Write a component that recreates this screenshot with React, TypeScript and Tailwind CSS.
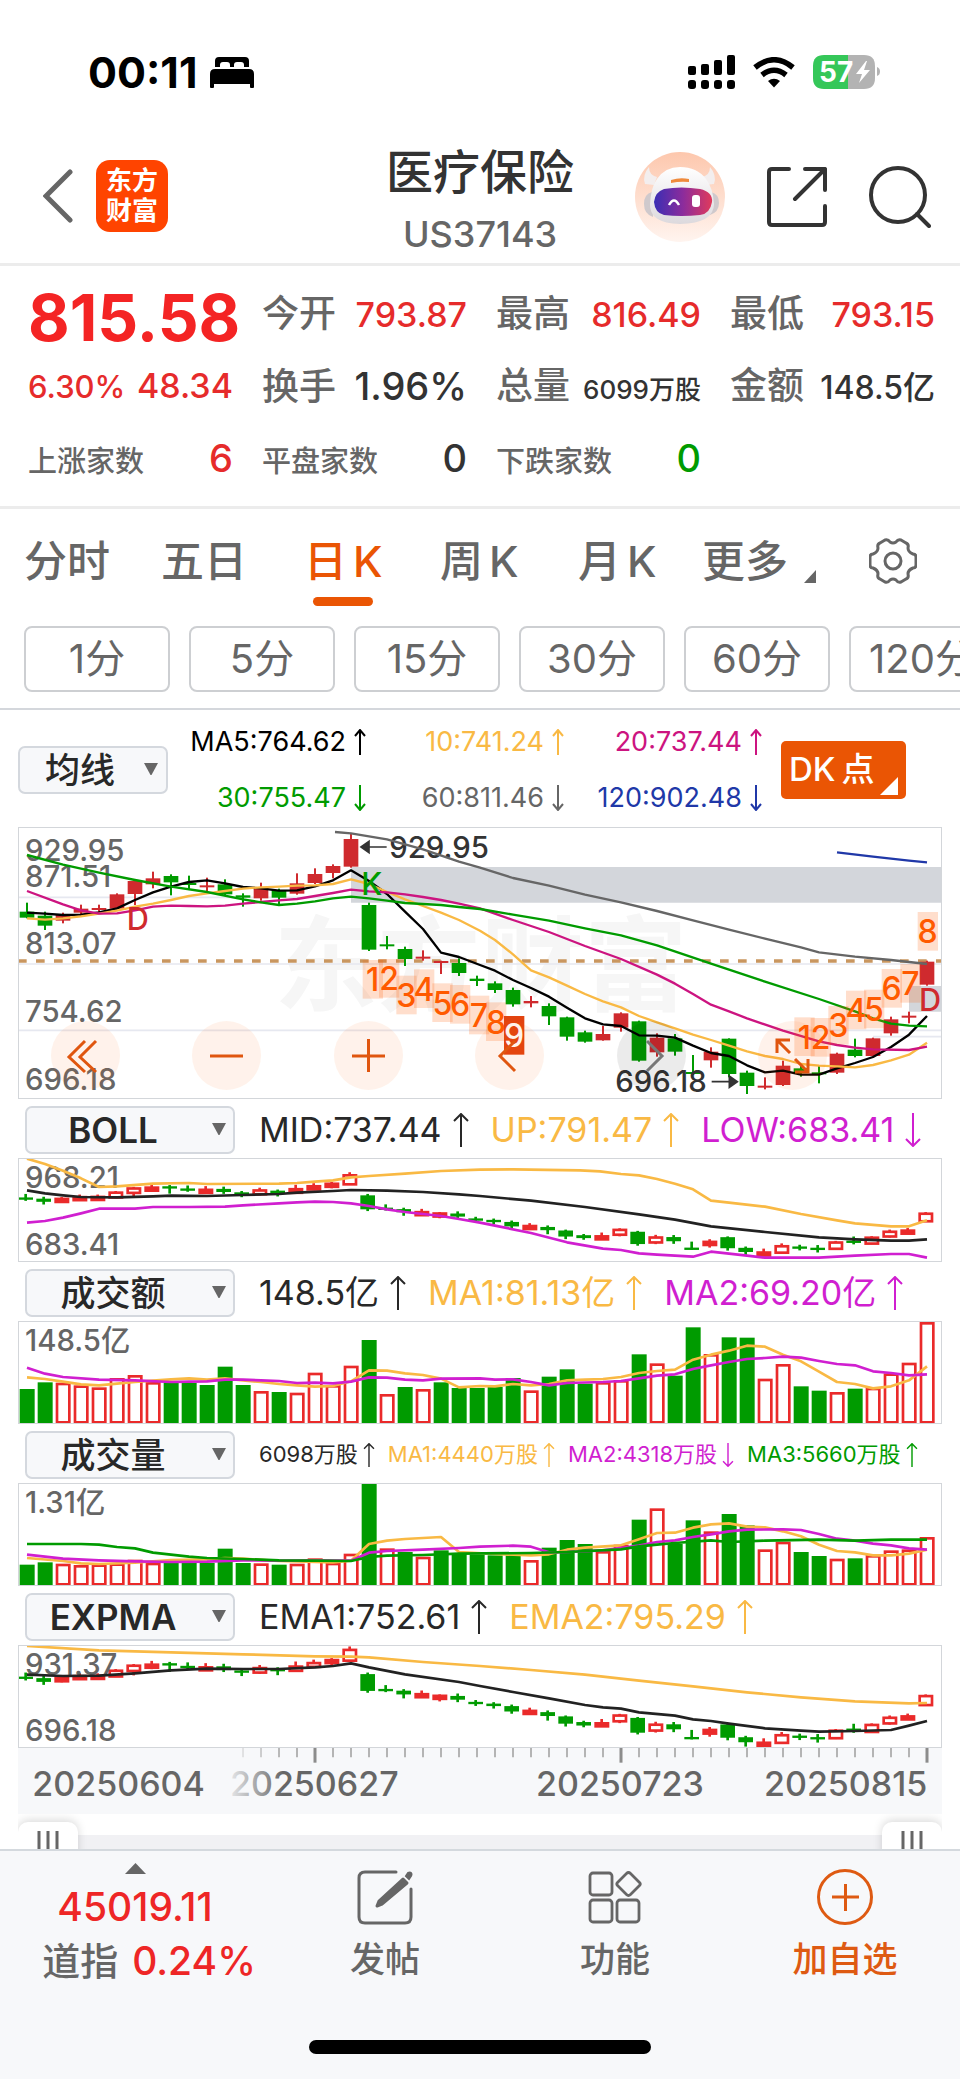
import React from 'react';

type Pt = [number, number];
type Candle = ['r' | 'g', number, number, number, number];
type Bar = ['r' | 'g', number];

const RED = '#cf2a2e';
const BRIGHT_RED = '#ea2a2a';
const GREEN = '#009b00';
const YELLOW = '#f9b944';
const MAGENTA = '#d01fd0';

const FIRST_X = 81;
const STEP = 54;

const candles: Candle[] = [
  ['g', 278, 325, 305, 323], ['g', 305, 360, 317, 347], ['r', 308, 340, 313, 332], ['r', 284, 312, 296, 308],
  ['r', 284, 308, 294, 300], ['r', 250, 298, 253, 296], ['r', 210, 285, 213, 252], ['r', 185, 235, 205, 223],
  ['g', 193, 256, 198, 217], ['g', 197, 238, 219, 225], ['r', 203, 245, 226, 232], ['g', 208, 258, 223, 253],
  ['g', 250, 290, 256, 263], ['r', 218, 272, 232, 265], ['g', 236, 283, 240, 263], ['r', 190, 254, 220, 251],
  ['r', 175, 222, 192, 219], ['r', 163, 205, 168, 189], ['r', 70, 173, 87, 170], ['g', 278, 423, 285, 419],
  ['g', 378, 418, 403, 409], ['g', 410, 468, 417, 447], ['r', 421, 452, 440, 446], ['r', 452, 492, 453, 459],
  ['g', 445, 498, 459, 489], ['g', 497, 528, 506, 513], ['g', 514, 549, 520, 540], ['g', 533, 590, 540, 583],
  ['r', 558, 592, 573, 580], ['g', 580, 645, 588, 619], ['g', 620, 692, 622, 680], ['g', 662, 698, 667, 695],
  ['r', 648, 692, 672, 691], ['r', 607, 665, 610, 653], ['g', 632, 755, 634, 752], ['r', 670, 740, 683, 727],
  ['g', 672, 737, 685, 725], ['g', 735, 795, 786, 792], ['r', 712, 773, 725, 751], ['g', 685, 802, 686, 792],
  ['g', 782, 852, 788, 828], ['r', 802, 838, 827, 833], ['r', 752, 828, 767, 825], ['g', 765, 800, 775, 787],
  ['g', 768, 820, 787, 793], ['r', 728, 792, 731, 788], ['g', 686, 742, 719, 738], ['r', 683, 740, 685, 738],
  ['r', 620, 677, 628, 670], ['r', 605, 640, 617, 623], ['r', 452, 527, 455, 524],
];

const ma5: Pt[] = [[81, 308], [135, 311], [189, 315], [243, 314], [297, 307], [351, 295], [405, 270], [459, 247], [513, 230], [567, 216], [621, 211], [675, 220], [729, 231], [783, 235], [837, 242], [891, 241], [945, 229], [999, 211], [1053, 181], [1107, 213], [1161, 252], [1215, 305], [1269, 357], [1323, 428], [1377, 441], [1440, 465], [1485, 482], [1539, 510], [1593, 534], [1647, 560], [1701, 593], [1755, 625], [1809, 643], [1863, 648], [1917, 676], [1971, 677], [2025, 683], [2079, 707], [2133, 729], [2187, 738], [2241, 766], [2295, 787], [2349, 782], [2403, 794], [2457, 794], [2511, 775], [2565, 759], [2619, 741], [2673, 711], [2727, 674], [2781, 618]];
const ma10: Pt[] = [[81, 325], [135, 329], [189, 325], [243, 319], [297, 311], [351, 302], [405, 290], [459, 281], [513, 270], [567, 258], [621, 250], [675, 243], [729, 236], [783, 232], [837, 230], [891, 227], [945, 226], [999, 222], [1053, 208], [1107, 222], [1161, 246], [1215, 268], [1269, 288], [1323, 308], [1377, 330], [1440, 362], [1485, 390], [1539, 433], [1593, 481], [1647, 502], [1701, 527], [1755, 552], [1809, 574], [1863, 592], [1917, 618], [1971, 637], [2025, 655], [2079, 674], [2133, 690], [2187, 707], [2241, 724], [2295, 738], [2349, 747], [2403, 762], [2457, 767], [2511, 769], [2565, 772], [2619, 765], [2673, 751], [2727, 734], [2781, 698]];
const ma20: Pt[] = [[81, 243], [189, 283], [243, 301], [297, 311], [351, 310], [405, 301], [459, 290], [513, 287], [567, 288], [621, 289], [675, 287], [729, 281], [783, 276], [837, 271], [891, 267], [945, 258], [999, 249], [1053, 239], [1107, 244], [1161, 247], [1215, 253], [1269, 261], [1323, 270], [1377, 281], [1440, 295], [1539, 330], [1647, 366], [1755, 408], [1863, 447], [1971, 494], [2025, 521], [2079, 552], [2133, 584], [2187, 604], [2241, 625], [2349, 662], [2457, 694], [2511, 705], [2565, 713], [2619, 718], [2727, 720], [2781, 710]];
const ma30: Pt[] = [[81, 135], [189, 164], [297, 188], [405, 210], [513, 230], [621, 246], [729, 268], [783, 277], [837, 285], [891, 281], [945, 274], [999, 265], [1053, 260], [1107, 265], [1161, 272], [1215, 279], [1323, 285], [1377, 291], [1440, 297], [1539, 314], [1647, 332], [1755, 355], [1863, 376], [1971, 406], [2133, 461], [2295, 515], [2457, 567], [2565, 604], [2619, 625], [2673, 641], [2727, 647], [2781, 649]];
const ma60: Pt[] = [[1005, 66], [1053, 70], [1161, 88], [1269, 118], [1377, 155], [1440, 173], [1539, 204], [1647, 227], [1755, 254], [1863, 277], [1971, 303], [2079, 331], [2187, 359], [2295, 386], [2403, 412], [2457, 427], [2565, 440], [2673, 450], [2781, 462]];
const ma120: Pt[] = [[2511, 127], [2619, 140], [2727, 152], [2781, 157]];

const bollUp: Pt[] = [[81, 177], [135, 193], [189, 213], [243, 236], [297, 262], [351, 260], [459, 252], [567, 250], [621, 253], [837, 252], [891, 250], [945, 246], [999, 242], [1053, 233], [1107, 229], [1215, 222], [1323, 214], [1440, 210], [1540, 209], [1740, 212], [1800, 215], [1863, 223], [1917, 227], [1971, 238], [2025, 252], [2079, 269], [2133, 303], [2187, 309], [2295, 321], [2403, 343], [2511, 362], [2565, 371], [2673, 380], [2727, 380], [2781, 362]];
const bollMid: Pt[] = [[81, 272], [135, 281], [189, 287], [243, 292], [351, 293], [459, 290], [513, 288], [621, 289], [729, 286], [837, 283], [891, 279], [999, 274], [1053, 271], [1161, 273], [1269, 277], [1377, 284], [1440, 289], [1593, 303], [1755, 322], [1917, 344], [2025, 360], [2133, 380], [2295, 397], [2457, 413], [2565, 419], [2673, 423], [2727, 423], [2781, 419]];
const bollLow: Pt[] = [[81, 369], [135, 364], [189, 354], [243, 341], [297, 327], [405, 327], [459, 322], [567, 322], [675, 321], [729, 317], [837, 311], [891, 308], [945, 306], [999, 307], [1053, 311], [1107, 319], [1161, 329], [1215, 337], [1323, 349], [1377, 358], [1440, 369], [1485, 378], [1593, 400], [1701, 428], [1809, 447], [1863, 451], [1917, 461], [1971, 465], [2079, 471], [2133, 456], [2187, 462], [2241, 468], [2295, 474], [2457, 474], [2565, 468], [2673, 463], [2727, 463], [2781, 474]];

const turnover: Bar[] = [['g', 868], ['g', 848], ['r', 850], ['r', 858], ['r', 864], ['r', 836], ['r', 827], ['r', 848], ['g', 850], ['g', 850], ['g', 856], ['g', 801], ['g', 856], ['r', 875], ['g', 877], ['r', 880], ['r', 820], ['r', 857], ['r', 799], ['g', 721], ['r', 884], ['g', 862], ['r', 869], ['g', 848], ['g', 865], ['g', 865], ['g', 862], ['g', 835], ['r', 873], ['g', 831], ['g', 809], ['g', 852], ['r', 848], ['r', 842], ['g', 764], ['r', 792], ['g', 828], ['g', 683], ['r', 764], ['g', 713], ['g', 714], ['r', 838], ['r', 794], ['g', 860], ['g', 873], ['r', 878], ['g', 867], ['r', 865], ['r', 822], ['r', 790], ['r', 668]];
const turnoverMa1: Pt[] = [[81, 833], [135, 838], [189, 846], [243, 854], [297, 857], [351, 852], [405, 847], [459, 843], [513, 839], [567, 836], [621, 840], [675, 836], [729, 842], [783, 847], [837, 853], [891, 857], [945, 861], [999, 859], [1053, 845], [1107, 812], [1161, 813], [1215, 821], [1269, 826], [1323, 837], [1377, 863], [1440, 859], [1485, 860], [1539, 853], [1593, 857], [1647, 853], [1701, 842], [1755, 840], [1809, 838], [1863, 832], [1917, 820], [1971, 814], [2025, 810], [2079, 780], [2133, 765], [2187, 753], [2241, 738], [2295, 741], [2349, 765], [2403, 785], [2457, 816], [2511, 847], [2565, 853], [2619, 866], [2673, 860], [2727, 842], [2781, 800]];
const turnoverMa2: Pt[] = [[81, 804], [135, 822], [189, 832], [297, 840], [405, 842], [513, 847], [567, 846], [621, 845], [675, 840], [729, 840], [783, 842], [837, 844], [891, 850], [945, 849], [999, 851], [1053, 846], [1107, 833], [1161, 834], [1215, 840], [1269, 842], [1323, 837], [1440, 836], [1485, 840], [1539, 839], [1593, 847], [1647, 857], [1701, 850], [1809, 847], [1863, 844], [1917, 836], [1971, 828], [2025, 824], [2079, 808], [2133, 797], [2187, 787], [2241, 778], [2295, 775], [2349, 771], [2403, 774], [2457, 784], [2511, 793], [2565, 797], [2619, 815], [2673, 820], [2727, 827], [2781, 824]];

const volume: Bar[] = [['g', 435], ['g', 428], ['r', 433], ['r', 437], ['r', 435], ['r', 432], ['r', 421], ['r', 430], ['g', 425], ['g', 428], ['g', 430], ['g', 387], ['g', 430], ['r', 432], ['g', 435], ['r', 433], ['r', 417], ['r', 430], ['r', 403], ['g', 192], ['r', 387], ['g', 397], ['r', 412], ['g', 392], ['g', 402], ['g', 405], ['g', 407], ['g', 407], ['r', 422], ['g', 384], ['g', 361], ['g', 373], ['r', 395], ['r', 376], ['g', 300], ['r', 267], ['g', 373], ['g', 302], ['r', 336], ['g', 283], ['g', 317], ['r', 390], ['r', 367], ['g', 397], ['g', 409], ['r', 418], ['g', 416], ['r', 407], ['r', 393], ['r', 390], ['r', 353]];
const volumeMa1: Pt[] = [[81, 415], [189, 424], [243, 431], [297, 433], [405, 429], [513, 421], [621, 419], [675, 415], [729, 417], [837, 424], [891, 425], [999, 428], [1053, 423], [1107, 373], [1161, 363], [1215, 358], [1323, 352], [1377, 397], [1485, 403], [1593, 407], [1647, 404], [1701, 390], [1755, 384], [1863, 377], [1917, 359], [1971, 340], [2025, 339], [2079, 324], [2133, 314], [2187, 311], [2241, 321], [2295, 323], [2349, 335], [2403, 350], [2457, 375], [2511, 394], [2565, 398], [2619, 407], [2673, 407], [2727, 402], [2781, 390]];
const volumeMa2: Pt[] = [[81, 405], [135, 411], [189, 417], [297, 422], [405, 425], [513, 427], [621, 426], [729, 422], [837, 423], [945, 422], [1053, 423], [1107, 399], [1161, 394], [1269, 390], [1377, 385], [1440, 381], [1539, 378], [1593, 381], [1647, 398], [1701, 397], [1809, 392], [1917, 378], [1971, 367], [2025, 362], [2079, 352], [2133, 344], [2187, 335], [2241, 330], [2349, 329], [2403, 331], [2457, 343], [2511, 357], [2565, 363], [2619, 372], [2673, 377], [2727, 386], [2781, 390]];
const volumeMa3: Pt[] = [[81, 373], [243, 373], [297, 375], [351, 382], [405, 386], [459, 399], [513, 405], [567, 411], [621, 415], [729, 418], [837, 422], [945, 423], [1053, 424], [1107, 412], [1161, 408], [1269, 406], [1377, 402], [1593, 400], [1701, 397], [1863, 389], [1917, 380], [1971, 375], [2025, 370], [2133, 362], [2187, 367], [2295, 363], [2457, 360], [2565, 363], [2673, 360], [2781, 360]];

const ema1: Pt[] = [[81, 765], [189, 769], [297, 768], [405, 761], [513, 752], [621, 747], [729, 748], [837, 748], [945, 743], [999, 739], [1053, 731], [1107, 743], [1215, 764], [1377, 787], [1440, 799], [1539, 817], [1647, 836], [1755, 856], [1809, 863], [1863, 867], [1917, 878], [2025, 888], [2079, 899], [2133, 904], [2187, 912], [2295, 926], [2403, 933], [2457, 936], [2565, 934], [2673, 931], [2727, 918], [2781, 904]];
const ema2: Pt[] = [[81, 679], [297, 692], [513, 698], [729, 704], [945, 710], [1053, 711], [1107, 713], [1269, 727], [1440, 739], [1593, 751], [1755, 765], [1917, 783], [2079, 800], [2241, 818], [2403, 833], [2565, 845], [2727, 851], [2781, 850]];

const countMarks: { n: number; x: number; y: number; solid?: boolean }[] = [
  { n: 1, x: 1118, y: 450 }, { n: 2, x: 1167, y: 447 }, { n: 3, x: 1219, y: 497 }, { n: 4, x: 1272, y: 478 },
  { n: 5, x: 1327, y: 520 }, { n: 6, x: 1380, y: 525 }, { n: 7, x: 1437, y: 557 }, { n: 8, x: 1488, y: 577 },
  { n: 9, x: 1542, y: 618, solid: true },
  { n: 1, x: 2413, y: 622 }, { n: 2, x: 2462, y: 624 }, { n: 3, x: 2515, y: 588 }, { n: 4, x: 2568, y: 542 },
  { n: 5, x: 2622, y: 539 }, { n: 6, x: 2675, y: 477 }, { n: 7, x: 2731, y: 462 }, { n: 8, x: 2783, y: 306 },
];

function Line({ pts, color, w = 7 }: { pts: Pt[]; color: string; w?: number }) {
  return <polyline points={pts.map((p) => p.join(',')).join(' ')} fill="none" stroke={color} strokeWidth={w} strokeLinejoin="round" />;
}

function Label({ x = 75, y, size = 88, fill = '#666666', children }: { x?: number; y: number; size?: number; fill?: string; children: React.ReactNode }) {
  return <text x={x} y={y} fontSize={size} fontWeight={500} fill={fill}>{children}</text>;
}

function MainCandles() {
  return (
    <g>
      {candles.map(([c, hi, lo, top, bot], i) => {
        const x = FIRST_X + i * STEP;
        const color = c === 'r' ? RED : GREEN;
        return (
          <g key={i} fill={color}>
            <rect x={x - 3} y={hi} width={6} height={lo - hi} />
            <rect x={x - 22} y={top} width={44} height={Math.max(6, bot - top)} />
          </g>
        );
      })}
    </g>
  );
}

function SmallCandles({ scale, offset }: { scale: number; offset: number }) {
  return (
    <g>
      {candles.map(([c, hi, lo, t, b], i) => {
        const x = FIRST_X - 4 + i * STEP;
        const y = t * scale + offset;
        const h = (b - t) * scale;
        const wickTop = hi * scale + offset - 3;
        const wickH = (lo - hi) * scale + 6;
        if (c === 'g') {
          return (
            <g key={i} fill={GREEN}>
              <rect x={x - 4} y={wickTop} width={8} height={wickH} />
              <rect x={x - 22} y={y - 1} width={44} height={Math.max(7, h)} />
            </g>
          );
        }
        const bodyH = Math.max(17, h + 9);
        return (
          <g key={i}>
            <rect x={x - 4} y={wickTop} width={8} height={wickH} fill={BRIGHT_RED} />
            <rect x={x - 18} y={y + 1} width={37} height={bodyH - 8} fill={bodyH > 19 ? '#ffffff' : BRIGHT_RED} stroke={BRIGHT_RED} strokeWidth={8} />
          </g>
        );
      })}
    </g>
  );
}

function Bars({ data, base }: { data: Bar[]; base: number }) {
  return (
    <g>
      {data.map(([c, y], i) => {
        const x = FIRST_X + i * STEP;
        return c === 'g'
          ? <rect key={i} x={x - 22} y={y} width={45} height={base - y} fill={GREEN} />
          : <rect key={i} x={x - 18} y={y + 3} width={37} height={base - y - 6} fill="#ffffff" stroke={BRIGHT_RED} strokeWidth={8} />;
      })}
    </g>
  );
}

function Plot({ top, height, label, children }: { top: number; height: number; label: string; children: React.ReactNode }) {
  return (
    <svg role="img" aria-label={label} viewBox={`54 ${top} 2772 ${height}`} className="block h-auto w-full">
      {children}
      <rect x={55.5} y={top + 1.5} width={2769} height={height - 3} fill="none" stroke="#d3d6da" strokeWidth={3} />
    </svg>
  );
}

function Arrow({ down = false, small = false }: { down?: boolean; small?: boolean }) {
  return (
    <svg viewBox="0 0 16 34" className={small ? 'h-[24px] w-[12px]' : 'h-[34px] w-[16px]'} fill="none" stroke="currentColor" strokeWidth={2}>
      {down ? <path d="M8 0v33M1 26l7 7 7-7" /> : <path d="M8 34V1M1 8l7-7 7 7" />}
    </svg>
  );
}

function Picker({ id, label, options, narrow = false, cjk = false }: { id: string; label: string; options: string[]; narrow?: boolean; cjk?: boolean }) {
  return (
    <div className={narrow ? 'relative w-[150px] shrink-0' : 'relative w-[210px] shrink-0'}>
      <label htmlFor={id} className="sr-only">{label}</label>
      <select
        id={id}
        defaultValue={options[0]}
        className={`h-[48px] w-full appearance-none rounded-[7px] border-2 border-[#d4d8de] bg-[#f7f8fa] text-center text-[35px] leading-[40px] text-[#282828] ${cjk ? 'font-medium' : 'font-semibold'} ${narrow ? 'pr-[26px]' : 'pr-[34px]'}`}
      >
        {options.map((o) => <option key={o}>{o}</option>)}
      </select>
      <svg viewBox="0 0 14 12" className={`pointer-events-none absolute top-[17px] h-[12px] w-[14px] ${narrow ? 'right-[10px]' : 'right-[9px]'}`} fill="#666666"><path d="M0 0h14L7.500 12h-1z" /></svg>
    </div>
  );
}

type Reading = { text: string; color: string; down?: boolean };

function IndicatorRow({ id, options, readings, small = false, cjk = false }: { id: string; options: string[]; readings: Reading[]; small?: boolean; cjk?: boolean }) {
  return (
    <div className="flex h-[59px] items-center pt-[2px] pl-[7px]">
      <Picker id={id} label="指标" options={options} cjk={cjk} />
      <div className={`ml-[24px] flex items-center font-normal whitespace-nowrap ${small ? 'gap-[13px] text-[22px]' : 'gap-[22px] text-[34px]'}`}>
        {readings.map((r) => (
          <span key={r.text} className={`flex items-center ${small ? 'gap-[5px]' : 'gap-[11px]'} ${r.color}`}>
            {r.text}<Arrow down={r.down} small={small} />
          </span>
        ))}
      </div>
    </div>
  );
}

function StatusBar() {
  return (
    <div className="flex h-[144px] items-center justify-between pr-[80px] pl-[88px]">
      <div className="flex items-center gap-[13px]">
        <span className="text-[43px] leading-[48px] font-bold text-black">00:11</span>
        <svg viewBox="0 0 44 31" className="h-[31px] w-[44px]">
          <path d="M5 10V4q0-4 4-4h26q4 0 4 4v6h-5V8q0-3-3-3h-4q-3 0-3 3v2h-4V8q0-3-3-3h-4q-3 0-3 3v2z" />
          <path d="M0 30V17q0-5 5-5h34q5 0 5 5v13q0 1-1 1h-2q-1 0-1-1v-3H4v3q0 1-1 1H1q-1 0-1-1z" />
        </svg>
      </div>
      <div className="flex items-center">
        <svg viewBox="0 0 48 34" className="h-[34px] w-[48px]">
          <rect x="0" y="11" width="8" height="9" rx="2" /><rect x="13" y="9" width="8" height="11" rx="2" />
          <rect x="26" y="5" width="8" height="15" rx="2" /><rect x="39" y="0" width="8" height="20" rx="2" />
          <rect x="0" y="25" width="8" height="9" rx="3" /><rect x="13" y="25" width="8" height="9" rx="3" />
          <rect x="26" y="25" width="8" height="9" rx="3" /><rect x="39" y="25" width="8" height="9" rx="3" />
        </svg>
        <svg viewBox="0 0 42 31" className="ml-[17px] h-[31px] w-[42px]" fill="none" stroke="#000" strokeWidth="5.500">
          <path d="M2 10.500q19-15.500 38 0" /><path d="M9 18q12-9.500 24 0" />
          <path d="M21 30.500l-6-6.500q6-4.500 12 0z" fill="#000" stroke="none" />
        </svg>
        <div className="relative ml-[18px] flex h-[34px] w-[67px] items-center">
          <svg viewBox="0 0 67 34" className="absolute inset-0 h-full w-full">
            <path d="M11 0h24v34H11Q0 34 0 23V11Q0 0 11 0z" fill="#35c759" />
            <path d="M35 0h16q11 0 11 11v12q0 11-11 11H35z" fill="#b3b3b3" />
            <path d="M64 12q3 1 3 4.500T64 21z" fill="#b3b3b3" />
            <path d="M53 6L43 19h6l-3 9 11-13h-6l3-9z" fill="#fff" />
          </svg>
          <span className="relative pl-[6px] text-[28px] leading-[34px] font-bold text-white">57</span>
        </div>
      </div>
    </div>
  );
}

function Robot() {
  return (
    <svg viewBox="0 0 90 90" className="h-[90px] w-[90px]">
      <defs>
        <linearGradient id="halo" x1="0" y1="0" x2="0" y2="1"><stop offset="0" stopColor="#fdc7ad" /><stop offset="1" stopColor="#fff4ef" /></linearGradient>
        <linearGradient id="visor" x1="0" y1="0" x2="1" y2="0"><stop offset="0" stopColor="#3a2eb4" /><stop offset=".5" stopColor="#8c2c9c" /><stop offset="1" stopColor="#e03a5c" /></linearGradient>
        <linearGradient id="shell" x1="0" y1="0" x2="0" y2="1"><stop offset="0" stopColor="#ffffff" /><stop offset="1" stopColor="#dcd9dd" /></linearGradient>
      </defs>
      <circle cx="45" cy="45" r="45" fill="url(#halo)" />
      <path d="M14 15q-7 8-4 17l9 1 3-8q-8-2-8-10zM75 15q7 8 4 17l-9 1-3-8q8-2 8-10z" fill="#f3eeee" />
      <path d="M17 40q-8 2-8 12t9 13zM76 40q8 2 8 11t-9 12z" fill="#cfc9cc" />
      <path d="M45 15q17 0 26 12 7 9 8 25 0 19-34 20-31-1-30-20 1-17 7-25 8-12 23-12z" fill="url(#shell)" />
      <path d="M36 28q9-3 18-1v3q-9-1-18 1z" fill="#ef8a3c" />
      <path d="M29 37q17-3 36 0 13 3 12 13-2 12-12 13-19 2-36 0-9-2-10-13 1-10 10-13z" fill="url(#visor)" />
      <path d="M34 53q5-9 10 0" fill="none" stroke="#fff" strokeWidth="2.500" />
      <rect x="57" y="43" width="8" height="12" rx="3" fill="#fff" />
    </svg>
  );
}

function Header() {
  return (
    <header className="grid h-[122px] grid-cols-[1fr_auto_1fr] items-start border-b-[3px] border-[#ececec] px-[29px]">
      <div className="flex items-center gap-[23px] pt-[16px] pl-[14px]">
        <button aria-label="返回" className="h-[54px] w-[30px]">
          <svg viewBox="0 0 30 54" className="h-full w-full" fill="none" stroke="#666" strokeWidth="5" strokeLinecap="round"><path d="M27 3L3 27l24 24" /></svg>
        </button>
        <a href="#home" className="flex h-[72px] w-[72px] flex-col items-center justify-center rounded-[14px] bg-[#ff4400] text-[26px] leading-[30px] font-bold text-white">
          <span>东方</span><span>财富</span>
        </a>
      </div>
      <div className="flex flex-col items-center">
        <h1 className="text-[47px] leading-[56px] font-medium text-[#333]">医疗保险</h1>
        <p className="mt-[12px] text-[36px] leading-[44px] font-medium text-[#666]">US37143</p>
      </div>
      <div className="flex items-center justify-end gap-[42px] pt-[8px]">
        <button aria-label="助手"><Robot /></button>
        <button aria-label="分享">
          <svg viewBox="0 0 60 60" className="h-[60px] w-[60px]" fill="none" stroke="#333" strokeWidth="4" strokeLinecap="round" strokeLinejoin="round"><path d="M22 2H5Q2 2 2 5v50q0 3 3 3h50q3 0 3-3V39M38 2h20v21M58 2L28 32" /></svg>
        </button>
        <button aria-label="搜索">
          <svg viewBox="0 0 62 62" className="h-[62px] w-[62px]" fill="none" stroke="#333" strokeWidth="4" strokeLinecap="round"><circle cx="29" cy="29" r="27" /><path d="M48 48l12 12" /></svg>
        </button>
      </div>
    </header>
  );
}

function Stat({ label, value, tone, size = 'text-[34px]', small = false }: { label: string; value: string; tone: string; size?: string; small?: boolean }) {
  return (
    <div className="flex items-baseline justify-between font-medium whitespace-nowrap">
      <span className={`text-[#666] ${small ? 'text-[29px]' : 'text-[37px]'}`}>{label}</span>
      <span className={`${size} ${tone}`}>{value}</span>
    </div>
  );
}

function Quote() {
  const red = 'text-[#e62b2b]';
  const dark = 'text-[#333]';
  return (
    <section className="grid h-[243px] grid-cols-4 grid-rows-[72px_72px_72px] gap-x-[29px] border-b-[3px] border-[#ececec] pt-[12px] pr-[25px] pl-[28px] leading-[72px]">
      <div className="text-[64px] leading-[80px] font-bold whitespace-nowrap text-[#f42424]">815.58</div>
      <Stat label="今开" value="793.87" tone={red} />
      <Stat label="最高" value="816.49" tone={red} />
      <Stat label="最低" value="793.15" tone={red} />
      <div className={`flex items-baseline justify-between text-[34px] font-medium whitespace-nowrap ${red}`}><span className="text-[31px]">6.30%</span><span>48.34</span></div>
      <Stat label="换手" value="1.96%" tone={dark} size="text-[38px]" />
      <Stat label="总量" value="6099万股" tone={dark} size="text-[26px]" />
      <Stat label="金额" value="148.5亿" tone={dark} size="text-[32px]" />
      <Stat label="上涨家数" value="6" tone={red} size="text-[38px]" small />
      <Stat label="平盘家数" value="0" tone={dark} size="text-[38px]" small />
      <Stat label="下跌家数" value="0" tone="text-[#009b00]" size="text-[38px]" small />
    </section>
  );
}

function Tabs() {
  return (
    <nav className="flex h-[100px] items-center pt-[3px] pr-[43px] pl-[24px] text-[43px] leading-[56px] font-medium text-[#666]">
      <button className="w-[137px] text-left">分时</button>
      <button className="w-[143px] text-left">五日</button>
      <button className="relative flex w-[136px] gap-[6px] text-left text-[#ea5504]"><span>日</span><span>K</span><span className="absolute -bottom-[17px] left-[9px] h-[9px] w-[60px] rounded-full bg-[#ea5504]" /></button>
      <button className="flex w-[138px] gap-[6px] text-left"><span>周</span><span>K</span></button>
      <button className="flex w-[124px] gap-[6px] text-left"><span>月</span><span>K</span></button>
      <button className="flex items-end gap-[16px]">更多<svg viewBox="0 0 12 13" className="mb-[6px] h-[13px] w-[12px]" fill="#666"><path d="M12 0v13H0z" /></svg></button>
      <button aria-label="设置" className="ml-auto">
        <svg viewBox="0 0 48 46" className="h-[46px] w-[48px]" fill="none" stroke="#666" strokeWidth="3" strokeLinejoin="round">
          <path d="M16 2q3-1 5 2 3 2 6 0 2-3 5-2l5 3q3 1 2 5 0 4 5 6 3 0 3 3v8q0 3-3 3-5 2-5 6 1 4-2 5l-5 3q-3 1-5-2-3-2-6 0-2 3-5 2l-5-3q-3-1-2-5 0-4-5-6-3 0-3-3v-8q0-3 3-3 5-2 5-6-1-4 2-5z" />
          <circle cx="24" cy="23" r="8" />
        </svg>
      </button>
    </nav>
  );
}

function Chips() {
  return (
    <div className="flex h-[101px] gap-[19px] overflow-hidden border-b-2 border-[#d4d7dc] pt-[17px] pl-[24px]">
      {['1分', '5分', '15分', '30分', '60分', '120分'].map((c) => (
        <button key={c} className="h-[66px] w-[146px] shrink-0 rounded-[8px] border-2 border-[#cdcfd2] text-[40px] leading-[60px] font-normal whitespace-nowrap text-[#666]">{c}</button>
      ))}
    </div>
  );
}

const averages: Reading[] = [
  { text: 'MA5:764.62', color: 'text-black' },
  { text: '10:741.24', color: 'text-[#f9b944]' },
  { text: '20:737.44', color: 'text-[#cc1480]' },
  { text: '30:755.47', color: 'text-[#009b00]', down: true },
  { text: '60:811.46', color: 'text-[#666]', down: true },
  { text: '120:902.48', color: 'text-[#2038a8]', down: true },
];

function AverageRow() {
  return (
    <div className="flex h-[117px] items-center pt-[2px]">
      <Picker id="avg" label="均线" options={['均线', 'BOLL']} narrow cjk />
      <div className="ml-[10px] grid grid-cols-[188px_198px_198px] gap-y-[22px]">
        {averages.map((a) => (
          <span key={a.text} className={`flex items-center justify-end gap-[8px] text-[27px] leading-[34px] font-normal whitespace-nowrap ${a.color}`}>
            {a.text}
            <svg viewBox="0 0 12 26" className="h-[26px] w-[12px]" fill="none" stroke="currentColor" strokeWidth={2}>
              {a.down ? <path d="M6 0v25M1 19l5 6 5-6" /> : <path d="M6 26V1M1 7l5-6 5 6" />}
            </svg>
          </span>
        ))}
      </div>
      <button className="relative ml-[19px] flex h-[58px] w-[125px] items-center gap-[6px] rounded-[5px] bg-[#ea5504] pl-[8px] text-[33px] font-medium whitespace-nowrap text-white">
        <span>DK</span><span>点</span>
        <svg viewBox="0 0 18 18" className="absolute right-[8px] bottom-[4px] h-[18px] w-[18px]" fill="#fff"><path d="M18 0v18H0z" /></svg>
      </button>
    </div>
  );
}

const controls: { label: string; tone: string; d: string }[] = [
  { label: '最左', tone: 'bg-[#ff5a00]/8 text-[#e0560f]', d: 'M34 20L18 36l16 15M45 20L29 36l16 15' },
  { label: '缩小', tone: 'bg-[#ff5a00]/8 text-[#e0560f]', d: 'M18 35h33' },
  { label: '放大', tone: 'bg-[#ff5a00]/8 text-[#e0560f]', d: 'M18 35h33M34.500 18v33' },
  { label: '左移', tone: 'bg-[#ff5a00]/8 text-[#e0560f]', d: 'M40 20L25 35l15 15' },
  { label: '右移', tone: 'bg-black/8 text-[#777]', d: 'M30 20l15 15-15 15' },
  { label: '全屏', tone: 'bg-[#ff5a00]/8 text-[#e0560f]', d: 'M32 19H19v13M19 19l13 13M50 38v13H37M50 51L37 38' },
];

function MainChart() {
  return (
    <div className="relative">
      <Plot top={51} height={816} label="日K线图">
        <text x={822} y={578} fontSize={310} fontWeight={700} fill="#f6f6f6">东方财富</text>
        <path d="M54 262H1053M54 462H2826M54 661H2826M2619 680H2826" stroke="#e6e8f0" strokeWidth={5} />
        <path d="M1053 171H2826V278H1053z" fill="#d3d6db" />
        <path d="M2727 528H2826V605H2727z" fill="#d3d6db" />
        <path d="M54 453H2826" stroke="#c9965f" strokeWidth={10} strokeDasharray="26 28" />
        <MainCandles />
        <Label y={153}>929.95</Label>
        <Label y={232}>871.51</Label>
        <Label y={432}>813.07</Label>
        <Label y={636}>754.62</Label>
        <Label y={840}>696.18</Label>
        <Line pts={ma5} color="#000000" />
        <Line pts={ma10} color={YELLOW} />
        <Line pts={ma20} color="#cc1480" />
        <Line pts={ma30} color={GREEN} />
        <Label x={1168} y={143} fill="#333333">929.95</Label>
        <path d="M1105 111H1160M1083 111l24-17v34z" stroke="#333" strokeWidth={5} fill="#333" />
        <Line pts={ma60} color="#666666" />
        <Line pts={ma120} color="#2038a8" />
        <text x={1084} y={256} fontSize={92} fontWeight={500} fill={GREEN}>K</text>
        <text x={380} y={361} fontSize={92} fontWeight={500} fill={RED}>D</text>
        <text x={2757} y={603} fontSize={92} fontWeight={500} fill={RED}>D</text>
        {countMarks.map((m, i) => (
          <g key={i}>
            <rect x={m.x - 30} y={m.y} width={61} height={116} fill={m.solid ? '#e2430f' : '#ff5a00'} fillOpacity={m.solid ? 1 : 0.2} />
            <text x={m.x} y={m.y + 94} fontSize={96} textAnchor="middle" fontWeight={500} fill={m.solid ? '#ffffff' : '#ff5a00'}>{m.n}</text>
          </g>
        ))}
        <Label x={1846} y={845} fill="#333333">696.18</Label>
        <path d="M2135 815H2190M2212 815l-24-17v34z" stroke="#333" strokeWidth={5} fill="#333" />
      </Plot>
      <div className="absolute right-[115px] bottom-[9px] left-[33px] flex justify-between">
        {controls.map((c) => (
          <button key={c.label} aria-label={c.label} className={`h-[69px] w-[69px] rounded-full ${c.tone}`}>
            <svg viewBox="0 0 69 69" className="h-full w-full" fill="none" stroke="currentColor" strokeWidth="3"><path d={c.d} /></svg>
          </button>
        ))}
      </div>
    </div>
  );
}

function DateAxis() {
  const ticks = Array.from({ length: 39 }, (_, k) => k + 12);
  return (
    <svg role="img" aria-label="日期" viewBox="54 984 2772 198" className="block h-auto w-full bg-[#f7f8fa]">
      <defs><linearGradient id="fade"><stop offset="0.300" stopColor="#f7f8fa" /><stop offset="1" stopColor="#f7f8fa" stopOpacity="0" /></linearGradient></defs>
      {ticks.map((i) => {
        const major = i === 16 || i === 33 || i === 50;
        const x = FIRST_X + i * STEP;
        return <path key={i} d={major ? `M${x} 984v44` : `M${x} 984v28`} stroke={major ? '#8c8c8c' : '#b4b4b4'} strokeWidth={major ? 9 : 6} />;
      })}
      <g fontSize={102} fontWeight={500} fill="#666666">
        <text x={690} y={1129}>20250627</text>
        <rect x={590} y={984} width={260} height={198} fill="url(#fade)" />
        <text x={97} y={1129}>20250604</text>
        <text x={1608} y={1129}>20250723</text>
        <text x={2782} y={1129} textAnchor="end">20250815</text>
      </g>
    </svg>
  );
}

function Handle({ label }: { label: string }) {
  return (
    <button aria-label={label} className="flex h-[40px] w-[60px] justify-center rounded-t-[10px] bg-white pt-[9px] shadow-[0_-2px_10px_rgba(0,0,0,0.15)]">
      <svg viewBox="0 0 22 30" className="h-[30px] w-[22px]" stroke="#666" strokeWidth="3"><path d="M2 0v30M11 0v30M20 0v30" /></svg>
    </button>
  );
}

function Footer() {
  return (
    <footer className="relative flex h-[230px] border-t-2 border-[#d4d9de] bg-[#f7f8fa] text-[35px] leading-[44px] font-medium text-[#666]">
      <a href="#index" className="flex flex-[27] flex-col items-center pt-[12px] whitespace-nowrap">
        <svg viewBox="0 0 21 11" className="h-[11px] w-[21px]" fill="#666"><path d="M10.500 0L21 11H0z" /></svg>
        <span className="mt-[11px] text-[39px] text-[#ee2626]">45019.11</span>
        <span className="mt-[10px] flex items-baseline gap-[14px] pl-[28px] text-[38px]"><span>道指</span><span className="text-[39px] text-[#ee2626]">0.24%</span></span>
      </a>
      <button className="flex flex-[23] flex-col items-center pt-[18px]">
        <svg viewBox="0 0 56 56" className="h-[56px] w-[56px]" fill="none" stroke="#666" strokeWidth="3">
          <path d="M39 3H8Q2 3 2 9v39q0 6 6 6h40q6 0 6-6V20" strokeLinecap="round" />
          <path d="M46 10l4 4L25 35l-5 2 2-5z" fill="#666" strokeLinejoin="round" />
          <path d="M49 7l2-3q2-1 3 0t0 3l-2 3z" fill="#666" strokeWidth="2" />
        </svg>
        <span className="mt-[12px]">发帖</span>
      </button>
      <button className="flex flex-[23] flex-col items-center pt-[18px]">
        <svg viewBox="0 0 56 56" className="h-[56px] w-[56px]" fill="none" stroke="#666" strokeWidth="2.800" strokeLinejoin="round">
          <rect x="3" y="4" width="22" height="22" rx="3" /><rect x="3" y="31" width="22" height="22" rx="3" /><rect x="30" y="31" width="22" height="22" rx="3" />
          <path d="M39.500 4.500q2-2 4 0l9 9q1.500 1.500 0 3l-9 9q-2 2-4 0l-9-9q-1.500-1.500 0-3z" />
        </svg>
        <span className="mt-[12px]">功能</span>
      </button>
      <button className="flex flex-[23] flex-col items-center pt-[18px] text-[#de5a12]">
        <svg viewBox="0 0 56 56" className="h-[56px] w-[56px]" fill="none" stroke="currentColor" strokeWidth="3"><circle cx="28" cy="28" r="26.500" /><path d="M15 28h27M28.500 15v27" /></svg>
        <span className="mt-[12px]">加自选</span>
      </button>
      <div className="absolute inset-x-0 bottom-[25px] mx-auto h-[14px] w-[342px] rounded-full bg-black" />
    </footer>
  );
}

export default function App() {
  return (
    <div className="overflow-hidden bg-white font-['Inter','Noto_Sans_CJK_SC',sans-serif]">
      <StatusBar />
      <Header />
      <Quote />
      <Tabs />
      <Chips />
      <main className="px-[18px]">
        <AverageRow />
        <MainChart />
        <IndicatorRow id="ind1" options={['BOLL', 'MACD']} readings={[
          { text: 'MID:737.44', color: 'text-[#282828]' },
          { text: 'UP:791.47', color: 'text-[#f9b944]' },
          { text: 'LOW:683.41', color: 'text-[#d01fd0]', down: true },
        ]} />
        <Plot top={175} height={312} label="BOLL">
          <SmallCandles scale={0.313} offset={198.8} />
          <Label y={266}>968.21</Label>
          <Label y={465}>683.41</Label>
          <Line pts={bollUp} color={YELLOW} w={8} />
          <Line pts={bollMid} color="#222222" w={8} />
          <Line pts={bollLow} color={MAGENTA} w={8} />
        </Plot>
        <IndicatorRow id="ind2" cjk options={['成交额', 'KDJ']} readings={[
          { text: '148.5亿', color: 'text-[#282828]' },
          { text: 'MA1:81.13亿', color: 'text-[#f9b944]' },
          { text: 'MA2:69.20亿', color: 'text-[#d01fd0]' },
        ]} />
        <Plot top={664} height={309} label="成交额">
          <Label y={753}>148.5亿</Label>
          <Bars data={turnover} base={971} />
          <Line pts={turnoverMa1} color={YELLOW} w={8} />
          <Line pts={turnoverMa2} color={MAGENTA} w={8} />
        </Plot>
        <IndicatorRow id="ind3" small cjk options={['成交量', 'RSI']} readings={[
          { text: '6098万股', color: 'text-[#282828]' },
          { text: 'MA1:4440万股', color: 'text-[#f9b944]' },
          { text: 'MA2:4318万股', color: 'text-[#d01fd0]', down: true },
          { text: 'MA3:5660万股', color: 'text-[#009b00]' },
        ]} />
        <Plot top={190} height={309} label="成交量">
          <Label y={280}>1.31亿</Label>
          <Bars data={volume} base={497} />
          <Line pts={volumeMa1} color={YELLOW} w={8} />
          <Line pts={volumeMa2} color={MAGENTA} w={8} />
          <Line pts={volumeMa3} color={GREEN} w={8} />
        </Plot>
        <IndicatorRow id="ind4" options={['EXPMA', 'WR']} readings={[
          { text: 'EMA1:752.61', color: 'text-[#282828]' },
          { text: 'EMA2:795.29', color: 'text-[#f9b944]' },
        ]} />
        <Plot top={676} height={309} label="EXPMA">
          <SmallCandles scale={0.3765} offset={657} />
          <Label y={765}>931.37</Label>
          <Label y={964}>696.18</Label>
          <Line pts={ema2} color={YELLOW} w={8} />
          <Line pts={ema1} color="#222222" w={8} />
        </Plot>
        <DateAxis />
        <div className="relative flex h-[35px] justify-between overflow-hidden pt-[8px]">
          <div className="absolute inset-x-0 bottom-0 h-[14px] bg-[#f1f1f4]" />
          <div className="relative"><Handle label="起始日期" /></div>
          <div className="relative"><Handle label="结束日期" /></div>
        </div>
      </main>
      <Footer />
    </div>
  );
}
